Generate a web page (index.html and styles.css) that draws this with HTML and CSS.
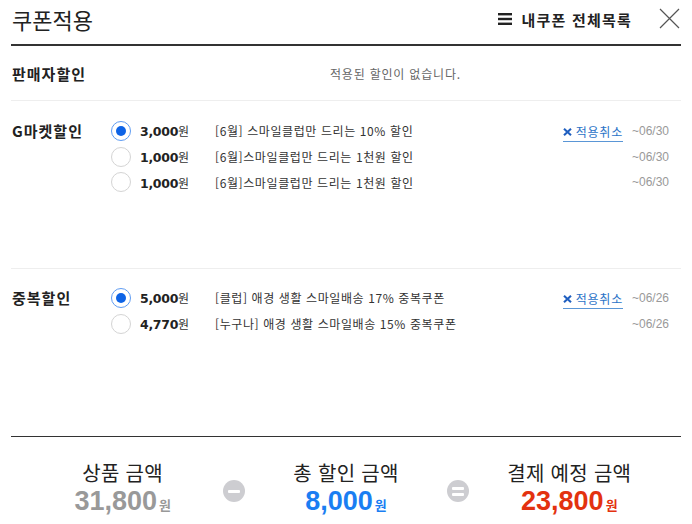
FILE: index.html
```html
<!DOCTYPE html>
<html lang="ko">
<head>
<meta charset="utf-8">
<title>쿠폰적용</title>
<link rel="stylesheet" href="styles.css">
</head>
<body>
<div class="wrap">
  <header class="header">
    <h1 class="title">쿠폰적용</h1>
    <a class="mylist" href="#">
      <svg class="menu-ic" width="14" height="12" viewBox="0 0 14 12"><rect x="0" y="0" width="14" height="2.4" fill="#222"/><rect x="0" y="4.8" width="14" height="2.4" fill="#222"/><rect x="0" y="9.6" width="14" height="2.4" fill="#222"/></svg>
      <span>내쿠폰 전체목록</span>
    </a>
    <button class="close" aria-label="닫기">
      <svg width="21" height="21" viewBox="0 0 21 21"><path d="M1 1 L20 20 M20 1 L1 20" stroke="#555" stroke-width="1.2" fill="none"/></svg>
    </button>
  </header>

  <section class="sec seller">
    <h2 class="label">판매자할인</h2>
    <p class="empty">적용된 할인이 없습니다.</p>
  </section>

  <section class="sec group">
    <h2 class="label">G마켓할인</h2>
    <ul class="list">
      <li class="row">
        <span class="radio on"></span>
        <span class="amt"><b>3,000</b>원</span>
        <span class="desc">[6월] 스마일클럽만 드리는 10% 할인</span>
        <a class="cancel" href="#"><svg class="x" width="9" height="8" viewBox="0 0 9 8"><path d="M1 0.8 L8 7.2 M8 0.8 L1 7.2" stroke="#1f5fc0" stroke-width="2.1" fill="none"/></svg>적용취소</a>
        <span class="date">~06/30</span>
      </li>
      <li class="row">
        <span class="radio"></span>
        <span class="amt"><b>1,000</b>원</span>
        <span class="desc">[6월]스마일클럽만 드리는 1천원 할인</span>
        <span class="date">~06/30</span>
      </li>
      <li class="row">
        <span class="radio"></span>
        <span class="amt"><b>1,000</b>원</span>
        <span class="desc">[6월]스마일클럽만 드리는 1천원 할인</span>
        <span class="date">~06/30</span>
      </li>
    </ul>
  </section>

  <section class="sec group last">
    <h2 class="label">중복할인</h2>
    <ul class="list">
      <li class="row">
        <span class="radio on"></span>
        <span class="amt"><b>5,000</b>원</span>
        <span class="desc">[클럽] 애경 생활 스마일배송 17% 중복쿠폰</span>
        <a class="cancel" href="#"><svg class="x" width="9" height="8" viewBox="0 0 9 8"><path d="M1 0.8 L8 7.2 M8 0.8 L1 7.2" stroke="#1f5fc0" stroke-width="2.1" fill="none"/></svg>적용취소</a>
        <span class="date">~06/26</span>
      </li>
      <li class="row">
        <span class="radio"></span>
        <span class="amt"><b>4,770</b>원</span>
        <span class="desc">[누구나] 애경 생활 스마일배송 15% 중복쿠폰</span>
        <span class="date">~06/26</span>
      </li>
    </ul>
  </section>

  <section class="summary">
    <div class="col">
      <div class="s-title">상품 금액</div>
      <div class="s-amt gray"><b>31,800</b><small>원</small></div>
    </div>
    <span class="op minus"></span>
    <div class="col">
      <div class="s-title">총 할인 금액</div>
      <div class="s-amt blue"><b>8,000</b><small>원</small></div>
    </div>
    <span class="op equal"></span>
    <div class="col">
      <div class="s-title">결제 예정 금액</div>
      <div class="s-amt red"><b>23,800</b><small>원</small></div>
    </div>
  </section>
</div>
</body>
</html>
```
FILE: styles.css
```css
* { box-sizing: border-box; margin: 0; padding: 0; }
body {
  margin: 0;
  background: #fff;
  font-family: "Noto Sans CJK KR", "Noto Sans", sans-serif;
  color: #333;
}
.wrap { width: 692px; padding: 0 11px; }

.header {
  height: 46px;
  display: flex;
  align-items: center;
  padding-bottom: 6px;
  border-bottom: 2px solid #333;
}
.title {
  font-size: 22px;
  font-weight: 400;
  color: #222;
  padding-left: 1px;
  flex: 1;
}
.mylist {
  display: flex;
  align-items: center;
  gap: 10px;
  text-decoration: none;
  color: #222;
  font-size: 15px;
  font-weight: 700;
  letter-spacing: 1.2px;
  margin-right: 27px;
}
.menu-ic { display: block; }
.close {
  border: 0;
  background: none;
  width: 21px;
  height: 21px;
  margin-right: 1px;
  margin-top: -2px;
}
.close svg { display: block; }

.sec { border-bottom: 1px solid #eee; }
.seller {
  height: 55px;
  display: flex;
  align-items: center;
}
.label {
  font-size: 15px;
  font-weight: 700;
  color: #222;
  width: 100px;
  flex: none;
  padding-left: 1px;
  letter-spacing: 1px;
}
.empty {
  font-size: 12px;
  color: #666;
  margin-left: 219px;
  letter-spacing: 0.8px;
}

.group {
  height: 168px;
  display: flex;
  align-items: flex-start;
  padding-top: 17px;
}
.group .label { line-height: 26px; }
.group.last { height: 168px; padding-top: 16px; border-bottom: 1px solid #333; }
.list { list-style: none; flex: 1; }
.row {
  height: 25.7px;
  display: flex;
  align-items: center;
  font-size: 12px;
  padding-right: 11px;
}
.radio {
  width: 20px;
  height: 20px;
  border-radius: 50%;
  border: 1px solid #d4d4d4;
  background: #fff;
  flex: none;
  position: relative;
}
.radio.on { border-color: #5f9cf2; }
.radio.on::after {
  content: "";
  position: absolute;
  left: 4px; top: 4px;
  width: 10px; height: 10px;
  border-radius: 50%;
  background: #0d63e6;
}
.amt {
  width: 75px;
  margin-left: 9px;
  color: #333;
  font-size: 12px;
}
.amt b {
  font-family: "DejaVu Sans", Verdana, sans-serif;
  font-size: 12.5px;
  color: #222;
  letter-spacing: -0.3px;
}
.desc { flex: 1; color: #333; letter-spacing: 0.6px; }
.cancel {
  display: flex;
  align-items: center;
  color: #2b73c7;
  text-decoration: none;
  border-bottom: 1px solid #5a96d6;
  padding-bottom: 1px;
  margin-top: 4px;
  letter-spacing: 0.8px;
}
.cancel .x { display: block; margin-right: 4px; flex: none; }
.date {
  font-family: "Liberation Sans", Arial, sans-serif;
  font-size: 12px;
  color: #999;
  width: 38px;
  margin-left: 9px;
}

.summary {
  display: flex;
  align-items: center;
  padding-top: 22px;
}
.col {
  flex: 1;
  display: flex;
  flex-direction: column;
  align-items: center;
}
.s-title {
  font-size: 20px;
  color: #222;
  line-height: 28px;
  letter-spacing: 0.3px;
}
.s-amt { line-height: 28px; }
.s-amt b {
  font-family: "Liberation Sans", Arial, sans-serif;
  font-size: 27px;
  font-weight: 700;
}
.s-amt small { font-size: 13px; margin-left: 2px; font-weight: 700; }
.gray { color: #999; }
.blue { color: #1a7ef2; }
.red { color: #e3320f; }
.op {
  width: 22px;
  height: 22px;
  border-radius: 50%;
  background: #cdcdd1;
  flex: none;
  margin: 0 -11px;
  position: relative;
  top: 2px;
}
.op::before, .op::after {
  content: "";
  position: absolute;
  left: 5px;
  width: 12px;
  height: 3px;
  border-radius: 1px;
  background: #fff;
}
.minus::before { top: 9.5px; }
.minus::after { display: none; }
.equal::before { top: 6.5px; }
.equal::after { top: 12.5px; }
```
